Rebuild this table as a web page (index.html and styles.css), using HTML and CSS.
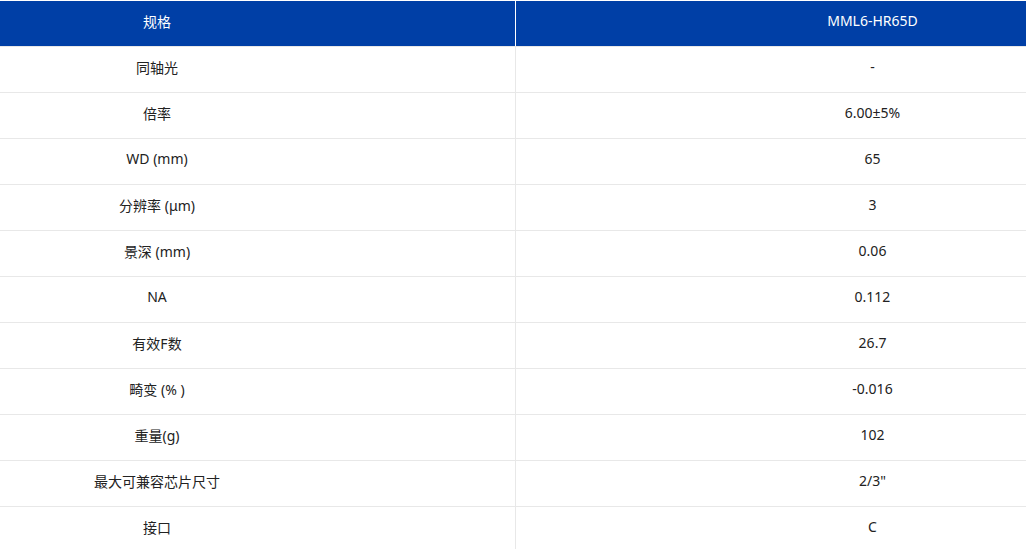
FILE: index.html
```html
<!DOCTYPE html>
<html lang="zh-CN">
<head>
<meta charset="utf-8">
<title>规格</title>
<link rel="stylesheet" href="styles.css">
</head>
<body>
<div class="spec">
  <div class="row head"><div class="cell">规格</div><div class="cell">MML6-HR65D</div></div>
  <div class="row"><div class="cell">同轴光</div><div class="cell">-</div></div>
  <div class="row"><div class="cell">倍率</div><div class="cell">6.00±5%</div></div>
  <div class="row"><div class="cell">WD (mm)</div><div class="cell">65</div></div>
  <div class="row"><div class="cell">分辨率 (μm)</div><div class="cell">3</div></div>
  <div class="row"><div class="cell">景深 (mm)</div><div class="cell">0.06</div></div>
  <div class="row"><div class="cell">NA</div><div class="cell">0.112</div></div>
  <div class="row"><div class="cell">有效F数</div><div class="cell">26.7</div></div>
  <div class="row"><div class="cell">畸变 (% )</div><div class="cell">-0.016</div></div>
  <div class="row"><div class="cell">重量(g)</div><div class="cell">102</div></div>
  <div class="row"><div class="cell">最大可兼容芯片尺寸</div><div class="cell">2/3"</div></div>
  <div class="row"><div class="cell">接口</div><div class="cell">C</div></div>
</div>
</body>
</html>
```
FILE: styles.css
```css
html, body {
  margin: 0;
  padding: 0;
  background: #fff;
}
body {
  font-family: "Noto Sans", "Noto Sans CJK SC", sans-serif;
  font-size: 14px;
  color: #222;
  overflow: hidden;
}
.spec {
  width: 1026px;
}
.row {
  display: flex;
  height: 45px;
  border-bottom: 1px solid #e8e8e8;
}
.row.head {
  border-top: 1px solid #fff;
  background: #003fa6;
  color: #fff;
}
.cell {
  display: flex;
  align-items: center;
  justify-content: center;
  white-space: nowrap;
  box-sizing: border-box;
  padding-bottom: 6px;
}
.cell:first-child {
  width: 515px;
  padding-right: 201px;
}
.cell + .cell {
  flex: 1;
  border-left: 1px solid #e8e8e8;
  padding-left: 203px;
}
.row.head .cell + .cell {
  border-left-color: #fff;
}
```
